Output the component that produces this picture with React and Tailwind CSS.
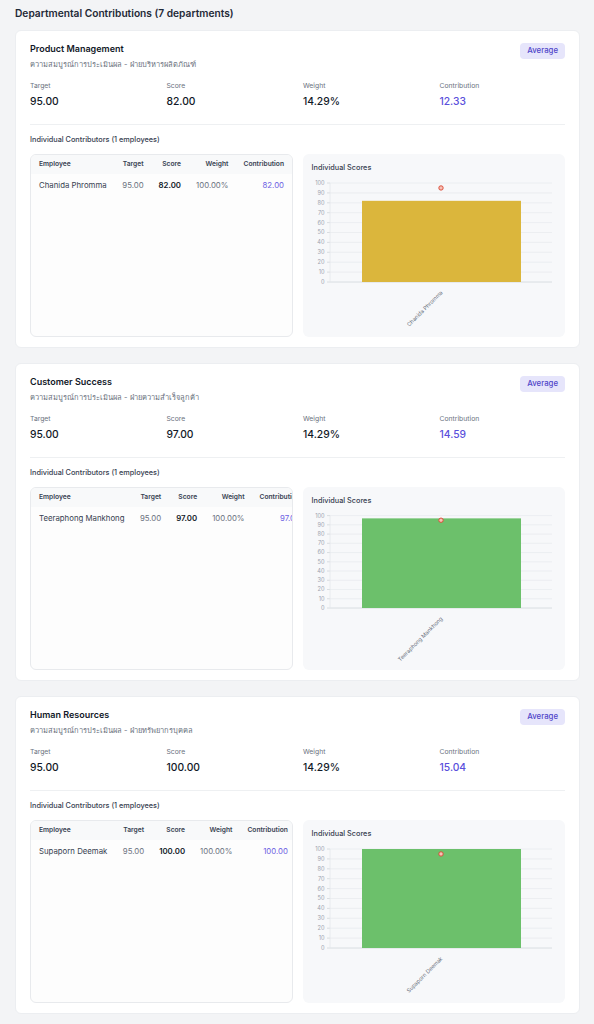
import React from "react";

const depts = [
  {
    name: "Product Management",
    thai: "ความสมบูรณ์การประเมินผล - ฝ่ายบริหารผลิตภัณฑ์",
    target: "95.00",
    score: "82.00",
    weight: "14.29%",
    contribution: "12.33",
    emp: { name: "Chanida Phromma", target: "95.00", score: "82.00", weight: "100.00%", contribution: "82.00" },
    value: 82,
    color: "#dbb63c",
    plotTop: 7,
    plotBottom: 106,
  },
  {
    name: "Customer Success",
    thai: "ความสมบูรณ์การประเมินผล - ฝ่ายความสำเร็จลูกค้า",
    target: "95.00",
    score: "97.00",
    weight: "14.29%",
    contribution: "14.59",
    emp: { name: "Teeraphong Mankhong", target: "95.00", score: "97.00", weight: "100.00%", contribution: "97.00" },
    value: 97,
    color: "#6cc06b",
    plotTop: 6.6,
    plotBottom: 99,
  },
  {
    name: "Human Resources",
    thai: "ความสมบูรณ์การประเมินผล - ฝ่ายทรัพยากรบุคคล",
    target: "95.00",
    score: "100.00",
    weight: "14.29%",
    contribution: "15.04",
    emp: { name: "Supaporn Deemak", target: "95.00", score: "100.00", weight: "100.00%", contribution: "100.00" },
    value: 100,
    color: "#6cc06b",
    plotTop: 7,
    plotBottom: 106,
  },
];

function Chart({ d }) {
  const { plotTop, plotBottom, value, color } = d;
  const h = plotBottom - plotTop;
  const y = (v) => plotBottom - (v / 100) * h;
  const ticks = [0, 10, 20, 30, 40, 50, 60, 70, 80, 90, 100];
  return (
    <svg width="263" height="161" viewBox="0 0 263 161" className="block">
      {ticks.map((t) => (
        <g key={t}>
          <line x1="27" x2="249" y1={y(t)} y2={y(t)} stroke={t === 0 ? "#d1d5db" : "#e9ebef"} strokeWidth="0.8" />
          <line x1="24" x2="27" y1={y(t)} y2={y(t)} stroke="#d1d5db" strokeWidth="0.8" />
          <text x="21.5" y={y(t) + 1.9} textAnchor="end" fontSize="5.6" fill="#9ca3af" fontFamily="Inter, sans-serif">
            {t}
          </text>
        </g>
      ))}
      <line x1="27" x2="27" y1={plotTop} y2={plotBottom} stroke="#e5e7eb" strokeWidth="0.8" />
      <rect x="59" y={y(value)} width="159" height={plotBottom - y(value)} fill={color} />
      <circle cx="138" cy={y(95)} r="2.2" fill="#f6c2b8" stroke="#d9442f" strokeWidth="0.9" />
      <text
        x="140"
        y={plotBottom + 11}
        textAnchor="end"
        fontSize="5.5"
        fill="#6b7280"
        fontFamily="Inter, sans-serif"
        transform={`rotate(-45 140 ${plotBottom + 11})`}
      >
        {d.emp.name}
      </text>
    </svg>
  );
}

function DeptCard({ d }) {
  return (
    <div className="bg-white rounded-[6px] border border-[#eceef1] px-[14px] pt-[11px] pb-[10px]">
      <div className="flex items-start justify-between">
        <div>
          <div className="text-[9px] leading-[12px] font-semibold text-[#111827] pt-[1px]">{d.name}</div>
          <div className="text-[7.5px] leading-[12px] text-[#6b7280] mt-[4px]">{d.thai}</div>
        </div>
        <div className="h-[16px] px-[7px] mt-[1px] flex items-center rounded-[4px] bg-[#e6e5fb] text-[#5046c9] text-[7.8px] font-medium">
          Average
        </div>
      </div>
      <div className="grid grid-cols-4 gap-x-[11px] mt-[10px]">
        {[
          ["Target", d.target, "text-[#111827]"],
          ["Score", d.score, "text-[#111827]"],
          ["Weight", d.weight, "text-[#111827]"],
          ["Contribution", d.contribution, "text-[#5a4fdc]"],
        ].map(([l, v, c]) => (
          <div key={l}>
            <div className="text-[6.8px] leading-[10px] text-[#6b7280]">{l}</div>
            <div className={`text-[10.3px] leading-[14px] font-medium mt-[3px] ${c}`}>{v}</div>
          </div>
        ))}
      </div>
      <div className="mt-[16px] border-t border-[#eef0f2] pt-[10px]">
        <div className="text-[7.3px] leading-[10px] font-medium text-[#374151]">Individual Contributors (1 employees)</div>
        <div className="grid grid-cols-2 gap-[10px] mt-[9px]">
          <div className="h-[183px] rounded-[6px] border border-[#e8eaed] bg-[#fdfdfd] overflow-hidden">
            <table className="w-full whitespace-nowrap border-collapse">
              <thead>
                <tr className="bg-[#f8f9fa]">
                  <th className="text-left px-[8px] h-[19px] text-[6.7px] font-semibold text-[#374151]">Employee</th>
                  <th className="text-right px-[7.5px] text-[6.7px] font-semibold text-[#374151]">Target</th>
                  <th className="text-right px-[7.5px] text-[6.7px] font-semibold text-[#374151]">Score</th>
                  <th className="text-right px-[7.5px] text-[6.7px] font-semibold text-[#374151]">Weight</th>
                  <th className="text-right px-[7.5px] text-[6.7px] font-semibold text-[#374151]">Contribution</th>
                </tr>
              </thead>
              <tbody>
                <tr>
                  <td className="text-left px-[8px] h-[23px] text-[7.8px] text-[#374151]">{d.emp.name}</td>
                  <td className="text-right px-[7.5px] text-[7.8px] text-[#6b7280]">{d.emp.target}</td>
                  <td className="text-right px-[7.5px] text-[7.8px] font-semibold text-[#111827]">{d.emp.score}</td>
                  <td className="text-right px-[7.5px] text-[7.8px] text-[#6b7280]">{d.emp.weight}</td>
                  <td className="text-right px-[7.5px] text-[7.8px] text-[#6d5fe3]">{d.emp.contribution}</td>
                </tr>
              </tbody>
            </table>
          </div>
          <div className="h-[183px] rounded-[6px] bg-[#f7f8fa] overflow-hidden">
            <div className="h-[22px] pt-[9px] pl-[9px] text-[7.3px] leading-[10px] font-medium text-[#374151]">
              Individual Scores
            </div>
            <Chart d={d} />
          </div>
        </div>
      </div>
    </div>
  );
}

export default function App() {
  return (
    <div
      className="bg-[#f3f4f6] pl-[15px] pr-[14px] pt-[6px] pb-[6px] min-h-screen"
      style={{ fontFamily: 'Inter, "Noto Sans", "DejaVu Sans", sans-serif' }}
    >
      <div className="text-[10.2px] leading-[14px] font-semibold text-[#1f2937] mb-[10px]">
        Departmental Contributions (7 departments)
      </div>
      <div className="flex flex-col gap-[15px]">
        {depts.map((d) => (
          <DeptCard key={d.name} d={d} />
        ))}
      </div>
    </div>
  );
}
